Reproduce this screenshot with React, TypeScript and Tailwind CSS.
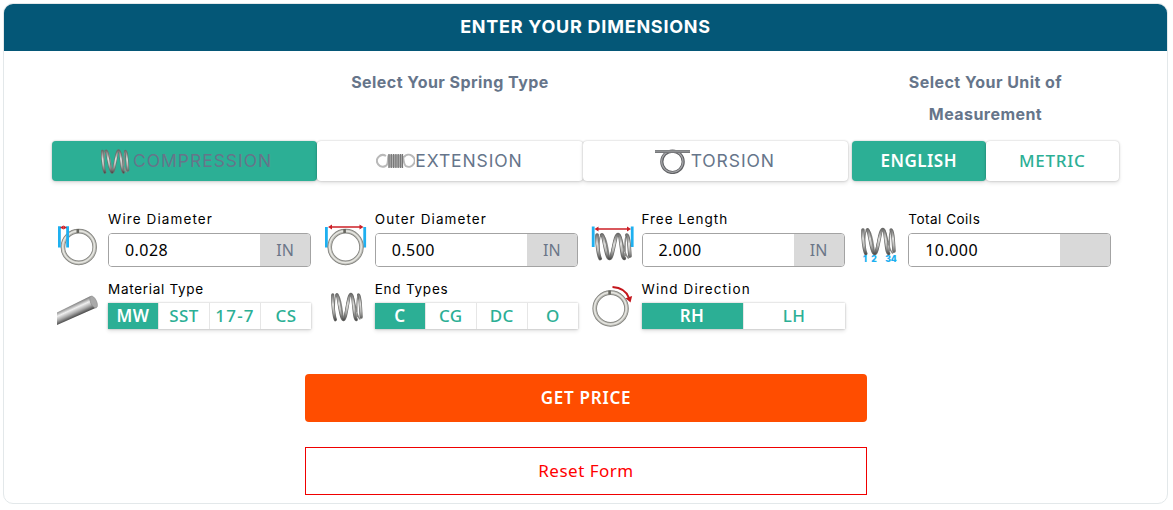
import React, { useState } from "react";
import clsx from "clsx";

type SpringProps = {
  x: number;
  y: number;
  w: number;
  h: number;
};

const COIL_PATH =
  "M2.5 2C2 10 4 24 5.5 26.5M7 2C9 0 11 26 14.5 26.5C18 27 19.5 1 23 1.5C26.5 2 26 26 29 26.5M31.5 2C33.5 2 34 20 34.5 24";
const COIL_BACK_PATH =
  "M5.5 26.5C3.5 20 4 2 7 2M9 3C13 8 13 22 15 26M22 2C18 6 18 22 14 26M24 2C28 5 28 22 33 26M29 26.5C31 22 28 6 31.5 2";

const Spring = ({ x, y, w, h }: SpringProps) => (
  <g
    transform={`translate(${x} ${y}) scale(${w / 36} ${h / 28})`}
    fill="none"
    strokeLinecap="round"
  >
    <defs>
      <linearGradient id="steel" gradientUnits="userSpaceOnUse" x1="0" y1="0" x2="0" y2="28">
        <stop offset="0" stopColor="#5f5f5f" />
        <stop offset="0.4" stopColor="#dededc" />
        <stop offset="0.65" stopColor="#b8b8b6" />
        <stop offset="1" stopColor="#3f3f3f" />
      </linearGradient>
    </defs>
    <path d={COIL_BACK_PATH} stroke="#8a8a88" strokeWidth="1.5" />
    <path d={COIL_PATH} stroke="#6c6c6a" strokeWidth="3.6" />
    <path d={COIL_PATH} stroke="url(#steel)" strokeWidth="2.2" />
  </g>
);

const Ring = ({ cx, cy }: { cx: number; cy: number }) => (
  <g fill="none">
    <circle cx={cx} cy={cy} r="15.9" stroke="#7d7d79" strokeWidth="4.6" />
    <circle cx={cx} cy={cy} r="15.9" stroke="#b9b9b3" strokeWidth="3.2" />
    <circle cx={cx - 0.2} cy={cy - 0.2} r="15.9" stroke="#e6e6e1" strokeWidth="1.5" />
    <path d={`M${cx - 1} ${cy - 18} v4`} stroke="#66665f" strokeWidth="2.6" />
  </g>
);

const Arrow = ({ x1, x2, y }: { x1: number; x2: number; y: number }) => (
  <g fill="#cc1f26">
    <path d={`M${x1 + 2} ${y} H${x2 - 2}`} stroke="#cc1f26" strokeWidth="1.5" />
    <path d={`M${x1} ${y} l4 -2.6 v5.2 z M${x2} ${y} l-4 -2.6 v5.2 z`} />
  </g>
);

const WireIcon = () => (
  <svg width="56" height="62" viewBox="0 0 56 62">
    <Ring cx={26.8} cy={37} />
    <path
      d="M7.4 17v20.5M15.6 17v20.5M6 17.6h3M14 17.6h3"
      stroke="#1eb0f0"
      strokeWidth="2.8"
    />
    <path d="M8 17.5l3.4-2v4zM15 17.5l-3.4-2v4z" fill="#cc1f26" />
  </svg>
);

const OuterIcon = () => (
  <svg width="56" height="62" viewBox="0 0 56 62">
    <path d="M7.4 17v20.5M45.7 17v20.5" stroke="#1eb0f0" strokeWidth="2.8" />
    <Ring cx={26.6} cy={37} />
    <Arrow x1={9} x2={44.5} y={17} />
  </svg>
);

const LengthIcon = () => (
  <svg width="56" height="62" viewBox="0 0 56 62">
    <Spring x={8.5} y={23} w={37} h={27} />
    <path d="M7.2 16.5V37M46.2 16.5V37" stroke="#1eb0f0" strokeWidth="2.8" />
    <Arrow x1={8.5} x2={45} y={19} />
  </svg>
);

const CoilsIcon = () => (
  <svg width="56" height="62" viewBox="0 0 56 62">
    <Spring x={8.5} y={18} w={35} h={27} />
    <g
      fill="#1eb0f0"
      fontFamily="Inter, sans-serif"
      fontSize="8.5"
      fontWeight="900"
      textAnchor="middle"
    >
      <text x="12.8" y="52">1</text>
      <text x="22" y="52">2</text>
      <text x="39" y="52">34</text>
    </g>
  </svg>
);

const RodIcon = () => (
  <svg width="56" height="52" viewBox="0 0 56 52">
    <defs>
      <linearGradient id="rod" gradientUnits="userSpaceOnUse" x1="20" y1="24.5" x2="25.5" y2="36.5">
        <stop offset="0" stopColor="#777" />
        <stop offset="0.35" stopColor="#efefef" />
        <stop offset="0.65" stopColor="#a8a8a8" />
        <stop offset="1" stopColor="#3e3e3e" />
      </linearGradient>
    </defs>
    <path d="M5 32.5L38.5 16L44 27.8L5 45z" fill="url(#rod)" />
    <ellipse
      cx="41.6"
      cy="22"
      rx="3"
      ry="6.4"
      transform="rotate(-25 41.6 22)"
      fill="#a9a9a9"
      stroke="#8b8b8b"
      strokeWidth="0.6"
    />
  </svg>
);

const EndsIcon = () => (
  <svg width="56" height="52" viewBox="0 0 56 52">
    <Spring x={11.5} y={13} w={32} h={28} />
  </svg>
);

const WindIcon = () => (
  <svg width="56" height="52" viewBox="0 0 56 52">
    <Ring cx={24.6} cy={28.5} />
    <path d="M26.5 7C34 7.5 40.5 11 43 18" fill="none" stroke="#c4161c" strokeWidth="2" />
    <path d="M39.5 18.2l6.6-2.2-1.6 6.6z" fill="#c4161c" />
  </svg>
);

const CompressionIcon = () => (
  <svg width="30" height="26" viewBox="0 0 30 26">
    <Spring x={0.5} y={1.5} w={28.5} h={24} />
  </svg>
);

const ExtensionIcon = () => (
  <svg width="39" height="16" viewBox="0 0 39 16">
    <g fill="none" stroke="#b9b9b9" strokeWidth="2">
      <path d="M10 3A5.8 5.8 0 1 0 9.5 13Q12 12 12 6Q12 3 13 2" />
      <path d="M27 3Q28 12 30 13.2A6 6 0 1 0 28 4" />
    </g>
    <rect x="12.5" y="1.5" width="14" height="13" fill="#b0b0b0" />
    <path
      d="M13 1v14M15.3 1v14M17.6 1v14M19.9 1v14M22.2 1v14M24.5 1v14M26.5 1v14"
      stroke="#777777"
      strokeWidth="1.2"
    />
  </svg>
);

const TorsionIcon = () => (
  <svg width="36" height="26" viewBox="0 0 36 26">
    <circle cx="17.5" cy="13.8" r="10.7" fill="none" stroke="#606164" strokeWidth="3.2" />
    <circle cx="17.3" cy="13.6" r="10.7" fill="none" stroke="#a3a4a7" strokeWidth="1.2" />
    <path d="M0 3.5h35" stroke="#77787b" strokeWidth="2.8" />
    <path d="M0 3.2h35" stroke="#a5a6a8" strokeWidth="0.8" />
  </svg>
);

const springTypes = [
  { name: "COMPRESSION", icon: <CompressionIcon />, style: "gap-[3px] pl-[48px]", text: "tracking-[0.95px]" },
  { name: "EXTENSION", icon: <ExtensionIcon />, style: "pl-[59px]", text: "tracking-[0.9px]" },
  { name: "TORSION", icon: <TorsionIcon />, style: "pl-[72px]", text: "tracking-[0.9px]" },
];

const cardShadow =
  "shadow-[0_0_2px_rgba(0,0,0,0.25),0_2px_4px_rgba(0,0,0,0.12)]";

type FieldProps = {
  label: string;
  icon: React.ReactNode;
  children: React.ReactNode;
  tracking?: string;
};

const Field = ({ label, icon, children, tracking = "tracking-[1.1px]" }: FieldProps) => (
  <div className="flex">
    {icon}
    <div className="flex w-[203px] flex-col">
      <label
        className={clsx(
          "mb-[5px] h-[18px] whitespace-nowrap text-[13.5px] leading-[18px] text-black",
          tracking
        )}
      >
        {label}
      </label>
      {children}
    </div>
  </div>
);

const NumberInput = ({ initial, unit }: { initial: string; unit: string }) => {
  const [value, setValue] = useState(initial);

  return (
    <div className="flex h-[34px] overflow-hidden rounded-[4px] border border-[#a3a3a3]">
      <input
        className="w-[151px] bg-white pl-4 font-['Noto_Sans',sans-serif] text-[16px] tracking-[0.45px] text-black outline-none"
        value={value}
        onChange={(e) => setValue(e.target.value)}
      />
      <span className="flex flex-1 items-center justify-center bg-[#d9d9d9] font-['Noto_Sans',sans-serif] text-[16px] text-[#6b7688]">
        {unit}
      </span>
    </div>
  );
};

const OptionGroup = ({ options }: { options: string[] }) => {
  const [selected, setSelected] = useState(options[0]);

  return (
    <div className={clsx("flex h-[26px] gap-px bg-[#e6e6e6]", cardShadow)}>
      {options.map((option) => (
        <button
          key={option}
          onClick={() => setSelected(option)}
          className={clsx(
            "flex-1 basis-0 whitespace-nowrap font-['Noto_Sans',sans-serif] text-[17px] leading-[26px]",
            option === "17-7" ? "tracking-[1.2px]" : "tracking-[0.4px]",
            selected === option
              ? "bg-[#2caf95] font-semibold text-white"
              : "bg-white font-medium text-[#2caf95]"
          )}
        >
          {option}
        </button>
      ))}
    </div>
  );
};

const App = () => {
  const [springType, setSpringType] = useState("COMPRESSION");
  const [unit, setUnit] = useState("ENGLISH");
  const suffix = unit === "ENGLISH" ? "IN" : "MM";

  return (
    <div className="h-[510px] w-[1173px] bg-white pl-[3px] pt-[3px] font-[Inter,sans-serif]">
      <div className="h-[501px] w-[1165px] overflow-hidden rounded-[10px] border border-[#e3e8ea]">
        <h1 className="h-[47px] bg-[#045777] text-center text-[18px] font-bold leading-[46px] tracking-[0.75px] text-white">
          ENTER YOUR DIMENSIONS
        </h1>
        <div className="px-12">
          <div className="flex h-[90px] gap-[4px] pt-[15px] text-center text-[16px] font-bold leading-8 tracking-[0.45px] text-[#66758a]">
            <h2 className="w-[796px]">Select Your Spring Type</h2>
            <h2 className="w-[267px] px-10">Select Your Unit of Measurement</h2>
          </div>
          <div className="flex h-[40px] gap-[4px]">
            <div className="grid w-[796px] grid-cols-3">
              {springTypes.map((type) => (
                <button
                  key={type.name}
                  onClick={() => setSpringType(type.name)}
                  className={clsx(
                    "flex items-center rounded-[4px] text-[17.5px] text-[#66758a]",
                    cardShadow,
                    type.style,
                    springType === type.name ? "bg-[#2caf95]" : "bg-white"
                  )}
                >
                  {type.icon}
                  <span className={type.text}>{type.name}</span>
                </button>
              ))}
            </div>
            <div className="flex w-[267px]">
              {["ENGLISH", "METRIC"].map((name) => (
                <button
                  key={name}
                  onClick={() => setUnit(name)}
                  className={clsx(
                    "flex-1 basis-0 rounded-[4px] font-['Noto_Sans',sans-serif] text-[17px]",
                    cardShadow,
                    unit === name
                      ? "bg-[#2caf95] font-semibold tracking-[0.5px] text-white"
                      : "bg-white font-medium tracking-[0.75px] text-[#2caf95]"
                  )}
                >
                  {name}
                </button>
              ))}
            </div>
          </div>
          <div className="mt-[29px] grid grid-cols-4 gap-y-[8px]">
            <Field label="Wire Diameter" icon={<WireIcon />}>
              <NumberInput initial="0.028" unit={suffix} />
            </Field>
            <Field label="Outer Diameter" icon={<OuterIcon />}>
              <NumberInput initial="0.500" unit={suffix} />
            </Field>
            <Field label="Free Length" icon={<LengthIcon />} tracking="tracking-[0.95px]">
              <NumberInput initial="2.000" unit={suffix} />
            </Field>
            <Field label="Total Coils" icon={<CoilsIcon />} tracking="tracking-[0.5px]">
              <NumberInput initial="10.000" unit="" />
            </Field>
            <Field label="Material Type" icon={<RodIcon />} tracking="tracking-[0.7px]">
              <OptionGroup options={["MW", "SST", "17-7", "CS"]} />
            </Field>
            <Field label="End Types" icon={<EndsIcon />} tracking="tracking-[0.75px]">
              <OptionGroup options={["C", "CG", "DC", "O"]} />
            </Field>
            <Field label="Wind Direction" icon={<WindIcon />}>
              <OptionGroup options={["RH", "LH"]} />
            </Field>
          </div>
          <div className="ml-[253px] mt-[42px] flex w-[562px] flex-col gap-[25px] font-['Noto_Sans',sans-serif] text-[17px]">
            <button className="h-12 rounded-[4px] bg-[#ff4d00] font-semibold tracking-[0.75px] text-white">
              GET PRICE
            </button>
            <button className="h-12 border border-[#f00000] bg-white tracking-[0.5px] text-[#ff0000]">
              Reset Form
            </button>
          </div>
        </div>
      </div>
    </div>
  );
};

export default App;
